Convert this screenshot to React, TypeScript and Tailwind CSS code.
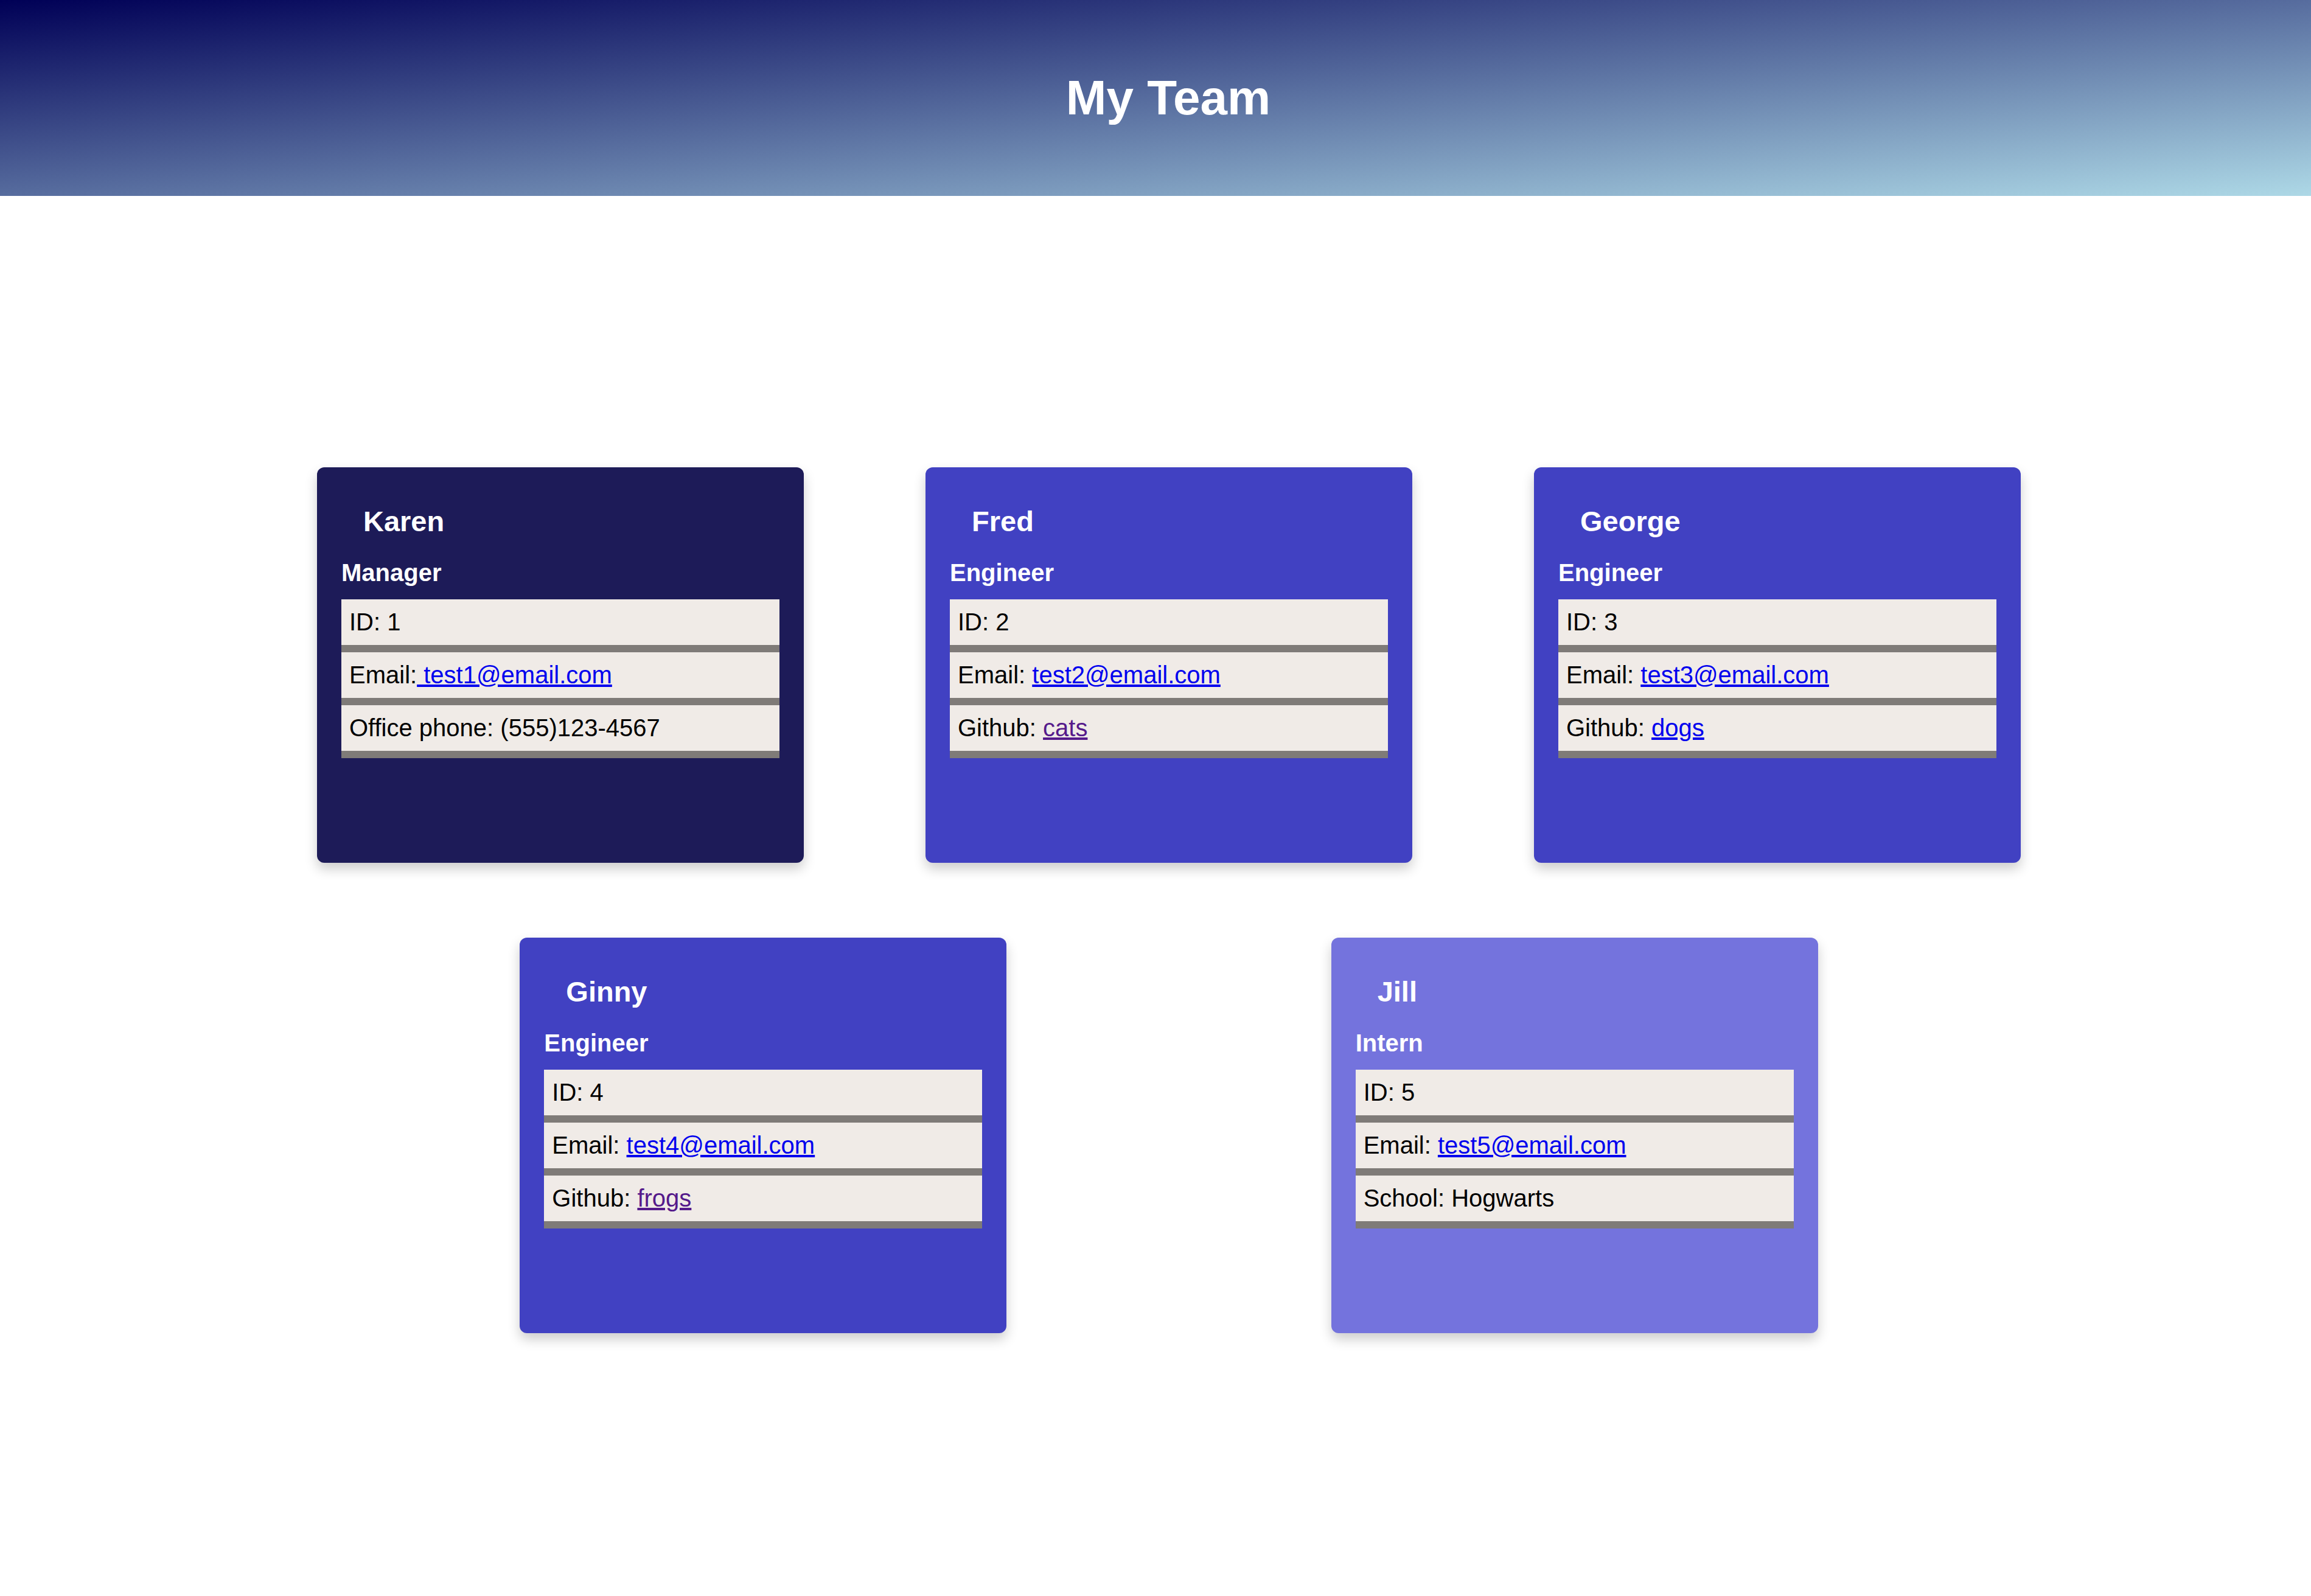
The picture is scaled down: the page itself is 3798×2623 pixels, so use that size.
const team = [
  {
    name: "Karen",
    role: "Manager",
    id: 1,
    email: " test1@email.com",
    extra: { label: "Office phone: ", value: "(555)123-4567" },
    bg: "bg-[#1d1b58]",
  },
  {
    name: "Fred",
    role: "Engineer",
    id: 2,
    email: "test2@email.com",
    extra: { label: "Github: ", value: "cats", link: true, visited: true },
    bg: "bg-[#4141c2]",
  },
  {
    name: "George",
    role: "Engineer",
    id: 3,
    email: "test3@email.com",
    extra: { label: "Github: ", value: "dogs", link: true },
    bg: "bg-[#4141c2]",
  },
  {
    name: "Ginny",
    role: "Engineer",
    id: 4,
    email: "test4@email.com",
    extra: { label: "Github: ", value: "frogs", link: true, visited: true },
    bg: "bg-[#4141c2]",
  },
  {
    name: "Jill",
    role: "Intern",
    id: 5,
    email: "test5@email.com",
    extra: { label: "School: ", value: "Hogwarts" },
    bg: "bg-[#7473dd]",
  },
];

type Member = (typeof team)[number];

function Row({ children }: { children: React.ReactNode }) {
  return (
    <li className="bg-[#f0ebe7] border-b-[12px] border-[#7f7b78] px-[13px] py-[15px] text-[40px] leading-[45px] text-black">
      {children}
    </li>
  );
}

function Card({ member }: { member: Member }) {
  const extra = member.extra as { label: string; value: string; link?: boolean; visited?: boolean };
  return (
    <div
      className={`w-[800px] h-[650px] shrink-0 rounded-[12px] px-[40px] pt-[62px] shadow-[0_10px_20px_0_rgba(0,0,0,0.2)] ${member.bg}`}
    >
      <h2 className="pl-[36px] text-[47px] leading-[54px] font-bold text-white">{member.name}</h2>
      <h3 className="mt-[35px] text-[40px] leading-[45px] font-bold text-white">{member.role}</h3>
      <ul className="mt-[21px]">
        <Row>ID: {member.id}</Row>
        <Row>
          Email:
          {member.email.startsWith(" ") ? "" : " "}
          <a href="#" className="text-[#0000ee] underline">
            {member.email}
          </a>
        </Row>
        <Row>
          {extra.label}
          {extra.link ? (
            <a href="#" className={extra.visited ? "text-[#551a8b] underline" : "text-[#0000ee] underline"}>
              {extra.value}
            </a>
          ) : (
            extra.value
          )}
        </Row>
      </ul>
    </div>
  );
}

export default function App() {
  const rows = [team.slice(0, 3), team.slice(3)];

  return (
    <div className="min-h-screen bg-white font-['Liberation_Sans',Arial,sans-serif]">
      <header className="h-[322px] flex items-center justify-center pl-[42px] bg-[linear-gradient(to_bottom_right,#000056,#add8e6)]">
        <h1 className="text-[80px] leading-[92px] font-bold text-white">My Team</h1>
      </header>

      <main className="ml-[321px] w-[3200px] mt-[446px] flex flex-col gap-[123px] pb-[200px]">
        {rows.map((row, i) => (
          <div key={i} className="flex justify-evenly">
            {row.map((member) => (
              <Card key={member.id} member={member} />
            ))}
          </div>
        ))}
      </main>
    </div>
  );
}
